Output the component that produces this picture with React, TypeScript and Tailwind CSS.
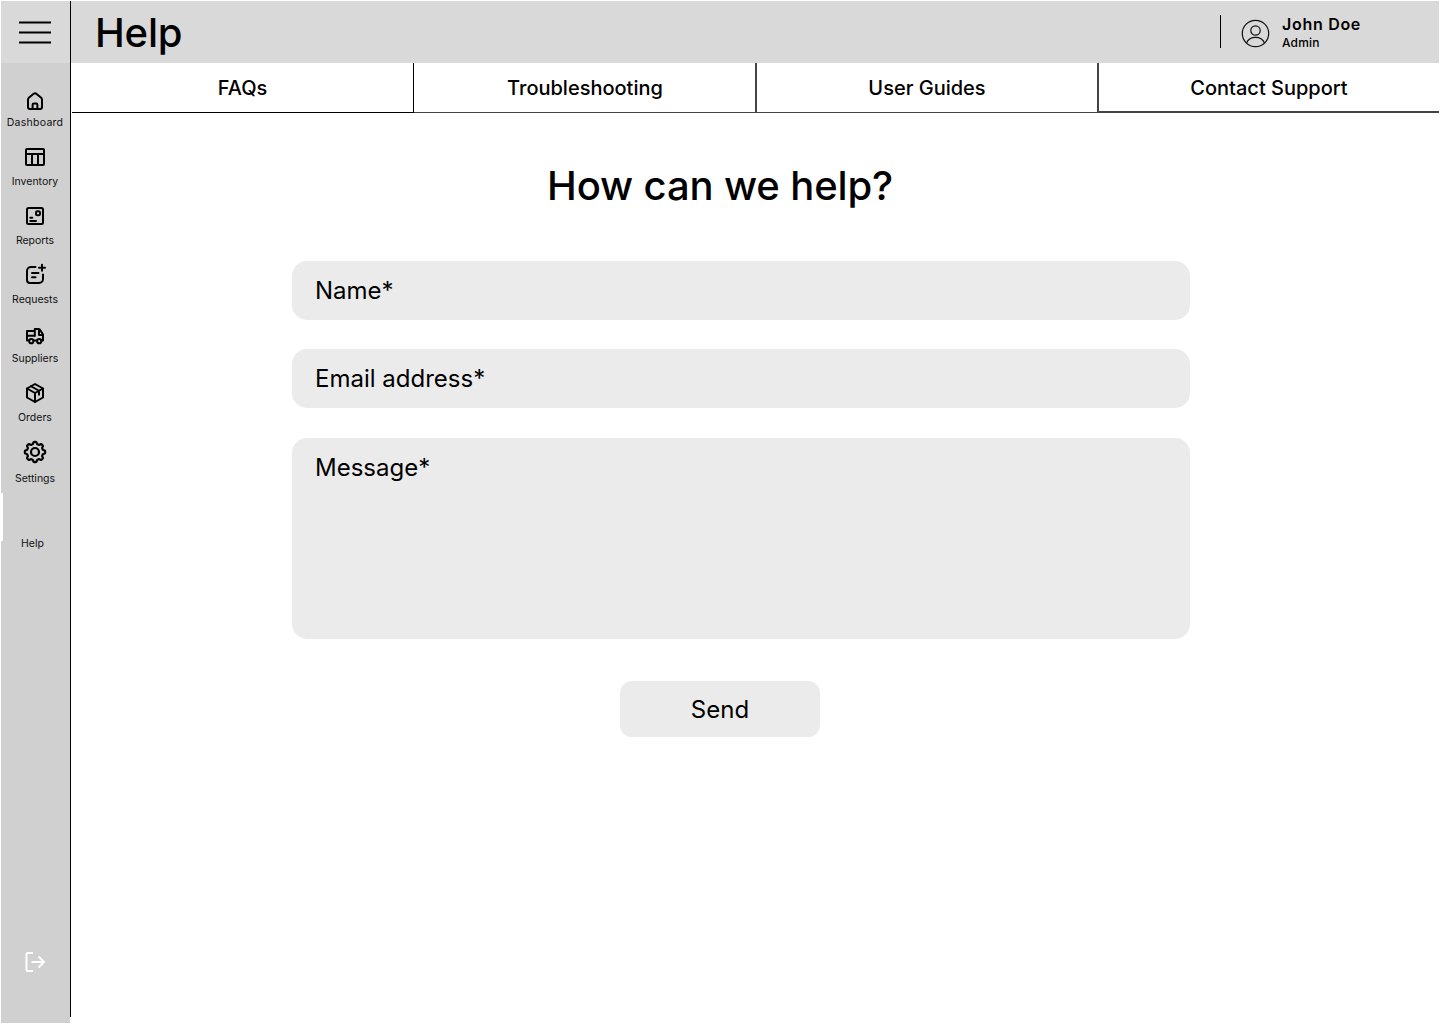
import React from "react";

type NavItem = {
  label: string;
  box: string;
  text: string;
  icon: React.ReactNode;
};

function Icon({ children, width = 2 }: { children: React.ReactNode; width?: number }) {
  return (
    <svg
      width="24"
      height="24"
      viewBox="0 0 24 24"
      fill="none"
      stroke="currentColor"
      strokeWidth={width}
      strokeLinecap="round"
      strokeLinejoin="round"
      className="shrink-0"
    >
      {children}
    </svg>
  );
}

const HomeIcon = (
  <Icon>
    <path d="M5 10.800c0-.9.4-1.600 1.100-2.200l4.300-3.700c.9-.8 2.300-.8 3.200 0l4.300 3.700c.7.6 1.100 1.300 1.100 2.200V18a2 2 0 0 1-2 2H7a2 2 0 0 1-2-2z" />
    <path d="M9.600 20v-4.200c0-.7.5-1.300 1.300-1.300h2.200c.8 0 1.300.6 1.300 1.300V20" />
  </Icon>
);

const TableIcon = (
  <Icon>
    <rect x="3" y="4" width="18" height="16" rx="1" />
    <path d="M3 9h18M9 9v11M15 9v11" />
  </Icon>
);

const ReportIcon = (
  <Icon>
    <rect x="4" y="4" width="16" height="16" rx="1.500" />
    <rect x="13" y="7.300" width="4" height="4" rx="1.400" />
    <path d="M7.300 13.800h2M7.300 16.900h5.700" />
  </Icon>
);

const RequestIcon = (
  <Icon>
    <path d="M12.500 4H8a4 4 0 0 0-4 4v9a3 3 0 0 0 3 3h9a4 4 0 0 0 4-4v-4.500" />
    <path d="M19 1.800v6M16 4.800h6M9 10h6.500M9 14.200h3.500" />
  </Icon>
);

const TruckIcon = (
  <Icon>
    <path d="M5.500 16.500H4V7h7.800M11.800 12V5h3.700c.6 0 1 .2 1.400.7l2.600 3.900c.4.6.5 1 .5 1.600v5.300h-1M4 11.800h7.800M16 6v5h3.500M11 16.500h2.500" />
    <circle cx="8.300" cy="17.200" r="2.100" />
    <circle cx="16.200" cy="17.200" r="2.100" />
  </Icon>
);

const PackageIcon = (
  <Icon>
    <path d="M12 3l8 4.500v9L12 21l-8-4.500v-9z" />
    <path d="M4 7.500l8 4.500 8-4.500M12 12v9M8 5.250l8 4.500v4" />
  </Icon>
);

const gearOutline = Array.from({ length: 192 }, (_, i) => {
  const angle = (i / 192) * Math.PI * 2;
  const radius = 9.1 + 1.05 * Math.tanh(2.2 * Math.cos(8 * angle));
  return `${(12 + radius * Math.cos(angle)).toFixed(2)},${(12 + radius * Math.sin(angle)).toFixed(2)}`;
}).join(" ");

const GearIcon = (
  <Icon width={2.2}>
    <circle cx="12" cy="12" r="4" />
    <polygon points={gearOutline} />
  </Icon>
);

const navItems: NavItem[] = [
  { label: "Dashboard", box: "h-[43px] pt-[17px]", text: "tracking-[0.28px]", icon: HomeIcon },
  { label: "Inventory", box: "h-[43px] pt-[14px]", text: "tracking-[0px]", icon: TableIcon },
  { label: "Reports", box: "h-[43px] pt-[14px]", text: "tracking-[-0.05px]", icon: ReportIcon },
  { label: "Requests", box: "h-[43px] pt-[14px]", text: "tracking-[0px]", icon: RequestIcon },
  { label: "Suppliers", box: "h-[43px] pt-[16px]", text: "tracking-[0px]", icon: TruckIcon },
  { label: "Orders", box: "h-[43px] pt-[14px]", text: "tracking-[0px]", icon: PackageIcon },
  { label: "Settings", box: "h-[45px] pt-[14px]", text: "tracking-[0px]", icon: GearIcon },
];

function Sidebar() {
  return (
    <aside className="flex h-[1022px] w-[70px] shrink-0 flex-col">
      <div className="flex h-[1016px] border-r border-black">
        <div className="flex w-[69px] flex-1 flex-col bg-[#d0d0d0]">
          <div className="flex h-[62px] shrink-0 justify-center bg-[#d9d9d9] pt-5 pr-px">
            <svg width="32" height="23" viewBox="0 0 32 23" stroke="#000" strokeWidth="2">
              <path d="M0 1.600h32M0 11.600h32M0 21.600h32" />
            </svg>
          </div>
          <nav className="flex flex-col pt-[9px]">
            {navItems.map((item) => (
              <a key={item.label} className="flex h-[59px] flex-col items-center pr-px">
                <span className={"flex shrink-0 " + item.box}>{item.icon}</span>
                <span className={"text-[10.5px] leading-4 text-[#111] " + item.text}>{item.label}</span>
              </a>
            ))}
            <a className="mt-[8px] flex h-12 flex-col border-l-2 border-white" />
            <a className="-mt-[5px] pl-5 text-[10.5px] leading-4 text-[#111]">Help</a>
          </nav>
          <div className="mt-auto flex justify-center pr-px pb-[43px] text-white">
            <Icon>
              <path d="M10 3H5A1.500 1.500 0 0 0 3.500 4.500v15A1.500 1.500 0 0 0 5 21h5M8.500 12h12.500M15.500 6.500l5.500 5.500L15.500 17.500" strokeLinecap="butt" strokeLinejoin="miter" />
            </Icon>
          </div>
        </div>
      </div>
      <div className="mr-px h-[6px] bg-[#d0d0d0]" />
    </aside>
  );
}

function Header() {
  return (
    <header className="flex h-[62px] items-start bg-[#d9d9d9]">
      <h1 className="mt-[8px] ml-[24px] text-[40px] leading-[48px] font-medium tracking-[-0.2px]">Help</h1>
      <div className="mt-[14px] ml-auto flex h-[33px] w-[219px] border-l border-black">
        <svg width="29" height="33" viewBox="0 0 29 33" fill="none" stroke="#111" strokeWidth="1.200" className="ml-[20px]">
          <circle cx="14.500" cy="18.500" r="13.200" />
          <circle cx="14.500" cy="15.500" r="4.700" />
          <path d="M5.500 28c1.600-3.600 4.900-5.600 9-5.600s7.400 2 9 5.600" />
        </svg>
        <div className="ml-[12px] flex flex-col">
          <span className="-mt-px text-[16px] leading-5 font-semibold tracking-[0.7px]">John Doe</span>
          <span className="mt-px text-[12px] leading-4 font-medium tracking-[0.2px]">Admin</span>
        </div>
      </div>
    </header>
  );
}

const tabs = [
  { label: "FAQs", style: "w-[342px] border-r border-b border-black" },
  { label: "Troubleshooting", style: "w-[343px] border-r-2 border-b border-r-[#444] border-b-[#444] pl-px" },
  { label: "User Guides", style: "w-[342px] border-r-2 border-b border-r-[#444] border-b-[#444]" },
  { label: "Contact Support", style: "w-[340px] border-b-2 border-[#444]" },
];

function Field({ label, box }: { label: string; box: string }) {
  return (
    <div className={"w-[898px] rounded-[15px] bg-[#ebebeb] px-[23px] text-[24px] leading-[30px] " + box}>{label}</div>
  );
}

export default function App() {
  return (
    <div className="flex h-[1024px] w-[1440px] overflow-hidden bg-white pt-px pr-px pl-px font-['Inter',sans-serif] text-black">
      <Sidebar />
      <main className="flex flex-1 flex-col">
        <Header />
        <nav className="ml-px flex h-[50px] shrink-0">
          {tabs.map((tab) => (
            <a key={tab.label} className={"flex h-[50px] justify-center pt-[10px] text-[20px] leading-[30px] font-medium whitespace-nowrap " + tab.style}>
              {tab.label}
            </a>
          ))}
        </nav>
        <section className="flex flex-col">
          <h2 className="mt-[49px] ml-[476px] text-[40px] leading-[48px] font-medium tracking-[-0.13px] whitespace-nowrap">How can we help?</h2>
          <form className="mt-[51px] ml-[221px] flex flex-col">
            <Field label="Name*" box="h-[59px] pt-[15px]" />
            <Field label="Email address*" box="mt-[29px] h-[59px] pt-[15px]" />
            <Field label="Message*" box="mt-[30px] h-[201px] pt-[15px]" />
            <button type="button" className="mt-[42px] ml-[328px] h-14 w-[200px] rounded-[12px] bg-[#ebebeb] pt-px text-[24px] leading-[30px]">
              Send
            </button>
          </form>
        </section>
      </main>
    </div>
  );
}
